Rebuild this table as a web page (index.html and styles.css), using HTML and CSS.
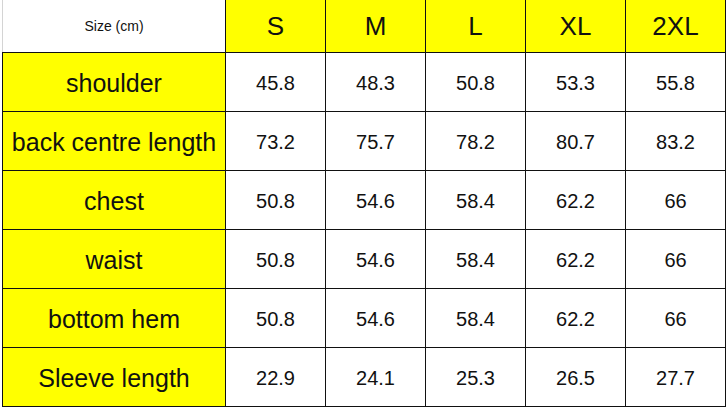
FILE: index.html
```html
<!DOCTYPE html>
<html>
<head>
<meta charset="utf-8">
<link rel="stylesheet" href="styles.css">
</head>
<body>
<div class="chart">
  <div class="cell corner">Size (cm)</div>
  <div class="cell head">S</div>
  <div class="cell head">M</div>
  <div class="cell head">L</div>
  <div class="cell head">XL</div>
  <div class="cell head">2XL</div>

  <div class="cell label">shoulder</div>
  <div class="cell val">45.8</div><div class="cell val">48.3</div><div class="cell val">50.8</div><div class="cell val">53.3</div><div class="cell val">55.8</div>

  <div class="cell label">back centre length</div>
  <div class="cell val">73.2</div><div class="cell val">75.7</div><div class="cell val">78.2</div><div class="cell val">80.7</div><div class="cell val">83.2</div>

  <div class="cell label">chest</div>
  <div class="cell val">50.8</div><div class="cell val">54.6</div><div class="cell val">58.4</div><div class="cell val">62.2</div><div class="cell val">66</div>

  <div class="cell label">waist</div>
  <div class="cell val">50.8</div><div class="cell val">54.6</div><div class="cell val">58.4</div><div class="cell val">62.2</div><div class="cell val">66</div>

  <div class="cell label">bottom hem</div>
  <div class="cell val">50.8</div><div class="cell val">54.6</div><div class="cell val">58.4</div><div class="cell val">62.2</div><div class="cell val">66</div>

  <div class="cell label">Sleeve length</div>
  <div class="cell val">22.9</div><div class="cell val">24.1</div><div class="cell val">25.3</div><div class="cell val">26.5</div><div class="cell val">27.7</div>
</div>
</body>
</html>
```
FILE: styles.css
```css
html, body {
  margin: 0;
  padding: 0;
  background: #fff;
}
body {
  font-family: "Liberation Sans", Arial, sans-serif;
  color: #111;
}
.chart {
  margin-left: 2px;
  width: 724px;
  box-sizing: border-box;
  display: grid;
  grid-template-columns: 222px repeat(5, 99px);
  grid-template-rows: 52px repeat(6, 58px);
  gap: 1px;
  padding: 0 1px 1px 1px;
  background: #111;
}
.cell {
  display: flex;
  align-items: center;
  justify-content: center;
  white-space: nowrap;
  box-sizing: border-box;
}
.corner {
  background: #fff;
  font-size: 14px;
  margin-left: -1px;
  border-left: 1px solid #d4d4d4;
}
.head {
  background: #ffff00;
  font-size: 26px;
}
.label {
  background: #ffff00;
  font-size: 25px;
  padding-top: 2px;
}
.val {
  background: #fff;
  font-size: 20px;
  padding-top: 2px;
}
```
